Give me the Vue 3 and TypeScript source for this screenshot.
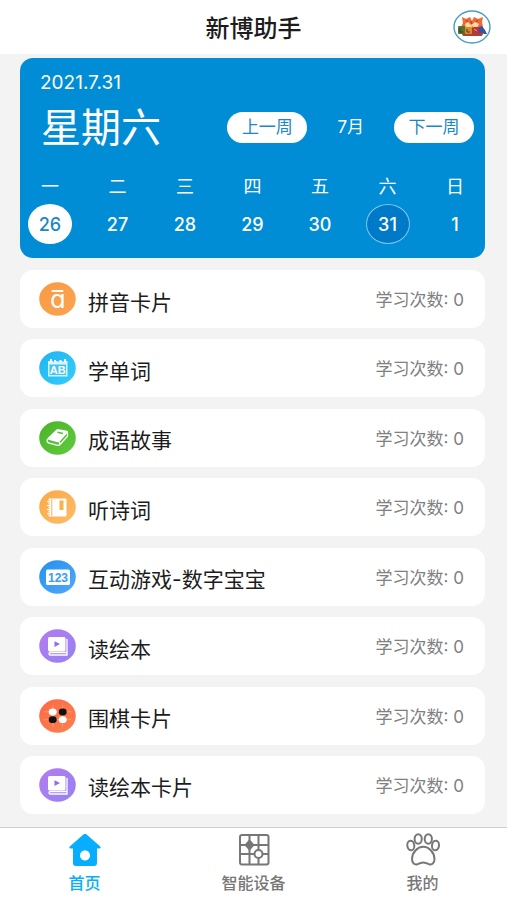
<script setup lang="ts">
type IconName = 'pinyin' | 'words' | 'book' | 'notebook' | 'numbers' | 'picture' | 'go'

interface Day { label: string; date: number; state?: 'selected' | 'today' }
interface Course { name: string; count: number; icon: IconName; from: string; to: string }

const days: Day[] = [
  { label: '一', date: 26, state: 'selected' },
  { label: '二', date: 27 },
  { label: '三', date: 28 },
  { label: '四', date: 29 },
  { label: '五', date: 30 },
  { label: '六', date: 31, state: 'today' },
  { label: '日', date: 1 },
]

const courses: Course[] = [
  { name: '拼音卡片', count: 0, icon: 'pinyin', from: '#f99a42', to: '#fca453' },
  { name: '学单词', count: 0, icon: 'words', from: '#1fb4f2', to: '#35cdfb' },
  { name: '成语故事', count: 0, icon: 'book', from: '#4bb32c', to: '#5fcb3a' },
  { name: '听诗词', count: 0, icon: 'notebook', from: '#fba945', to: '#fdbc6a' },
  { name: '互动游戏-数字宝宝', count: 0, icon: 'numbers', from: '#2390f0', to: '#52a9f8' },
  { name: '读绘本', count: 0, icon: 'picture', from: '#b57bee', to: '#9482f3' },
  { name: '围棋卡片', count: 0, icon: 'go', from: '#fb6a45', to: '#fc8050' },
  { name: '读绘本卡片', count: 0, icon: 'picture', from: '#b57bee', to: '#9482f3' },
]
</script>

<template>
  <div class="page">
    <header class="header">
      <h1 class="title">新博助手</h1>
      <a class="avatar" href="#" aria-label="新博助手">
        <svg width="38" height="34" viewBox="0 0 38 34">
          <ellipse cx="19" cy="17" rx="18" ry="16" fill="#fff" stroke="#4a9fbd" stroke-width="1.4" />
          <path d="M9 7l4 2 4-2 2 4 2-4 4 2 5-2-1 5 1 5-4 3H12l-4-3 2-4z" fill="#ee6a35" />
          <path d="M12 14l3-2 3 3 4-3 4 2-2 4H13z" fill="#f9d9a8" />
          <path d="M13 11h2M23 11h2M18 11l1 3" stroke="#a43e22" stroke-width="1" />
          <path d="M8 22h23l-2 4H10z" fill="#a44336" />
          <rect x="5" y="16" width="7" height="8" rx="1" fill="#55722f" />
          <rect x="12" y="17" width="7" height="7" rx="1" fill="#dd8a24" />
          <path d="M7 18v4h3M14 19v3h3" stroke="#3b362f" fill="none" />
          <rect x="19" y="17" width="7" height="7" rx="1" fill="#bd303e" />
          <path d="M26 17l3-1 3 4 2 4h-3l-2-2-3 2z" fill="#3453a5" />
          <path d="M21 19l3 2M18 16l3 1" stroke="#e5b23a" />
        </svg>
      </a>
    </header>

    <main class="main">
      <section class="calendar">
        <div class="full-date">2021.7.31</div>
        <div class="calendar-head">
          <h2 class="weekday">星期六</h2>
          <div class="switcher">
            <button class="week-button" type="button">上一周</button>
            <span class="month">7月</span>
            <button class="week-button" type="button">下一周</button>
          </div>
        </div>
        <div class="days">
          <div v-for="day in days" :key="day.date" class="day">
            <span class="day-label">{{ day.label }}</span>
            <button type="button" class="day-number" :class="day.state">{{ day.date }}</button>
          </div>
        </div>
      </section>

      <ul class="courses">
        <li v-for="(course, i) in courses" :key="course.name">
          <a class="course" href="#">
            <svg class="course-icon" width="37" height="34" viewBox="0 0 37 34" aria-hidden="true">
              <defs>
                <linearGradient :id="'tint' + i" x1="0" y1="0" x2="1" y2="1">
                  <stop offset="0" :stop-color="course.from" />
                  <stop offset="1" :stop-color="course.to" />
                </linearGradient>
              </defs>
              <ellipse cx="18.5" cy="17" rx="18.3" ry="16.7" :fill="`url(#tint${i})`" />
              <g v-if="course.icon === 'pinyin'">
                <rect x="12.500" y="8" width="12" height="2" rx="1" fill="#fff" />
                <text class="letter" x="19" y="25.500" font-size="25">ɑ</text>
              </g>
              <g v-else-if="course.icon === 'words'">
                <path d="M9 10h19.500v15.500H9z" fill="#d8f5ff" />
                <path d="M10.500 13.500h16.500V24H10.500z" fill="#43c5f4" />
                <path d="M12 8v3M16 9v2M21.500 9v2M26 8v3" stroke="#fff" stroke-width="2" />
                <path d="M14 10.500h1M18.500 10.500h1M23.500 10.500h1" stroke="#35bdf0" />
                <text class="bold" x="18.800" y="22.500" font-size="11">AB</text>
              </g>
              <g v-else-if="course.icon === 'book'">
                <path d="M17.500 8.500Q18.500 7.800 20 8.200L28 9.700Q30 10.200 28.800 11.600L20.500 20.700Q19.700 21.500 18.500 21.200L9.500 18.800Q7.500 18.200 9 16.700z" fill="#fff" />
                <path d="M8.500 18Q7.500 21 9.500 22L18.700 24.300Q20 24.500 21 23.500L28.500 15.300V11.500M20.600 21v3" fill="none" stroke="#fff" stroke-width="1.300" />
                <path d="M18.500 11.200l5.500 1.200" stroke="#58bd38" stroke-width="1.500" />
              </g>
              <g v-else-if="course.icon === 'notebook'">
                <rect x="9.500" y="8.500" width="18" height="18" rx="1" fill="#fff" />
                <path d="M12.800 9v17" stroke="#fbb255" />
                <path d="M8 11.500h3M8 15.500h3M8 19.500h3M8 23.500h3" stroke="#fbb255" stroke-width="2.200" />
                <path d="M8 11.500h3M8 15.500h3M8 19.500h3M8 23.500h3" stroke="#fff" stroke-width="1" />
                <rect x="20.500" y="10.500" width="4" height="9.500" rx=".5" fill="#fbb04f" />
              </g>
              <g v-else-if="course.icon === 'numbers'">
                <rect x="7" y="9.500" width="24" height="15.500" rx="1.500" fill="#fff" />
                <text class="bold numbers" x="19" y="21.500" font-size="12">123</text>
              </g>
              <g v-else-if="course.icon === 'picture'">
                <rect x="9" y="8" width="17.500" height="14.500" rx="1.500" fill="#fff" />
                <path d="M28 10v13.500H11.500Q10 23.500 10 24.800T11.500 26H28V22" fill="none" stroke="#fff" stroke-width="1.300" />
                <path d="M15.500 12.200l5.500 2.900-5.500 2.900z" fill="#9969ed" />
              </g>
              <g v-else>
                <path d="M14 6v22M23.500 6v22M5 12.800h27M5 20.700h27" stroke="#fdb78f" stroke-width=".8" opacity=".7" />
                <ellipse cx="13.700" cy="13" rx="4" ry="3.400" fill="#fff" />
                <ellipse cx="23.700" cy="13" rx="4" ry="3.400" fill="#111" />
                <ellipse cx="13.700" cy="20.700" rx="4" ry="3.400" fill="#111" />
                <ellipse cx="23.700" cy="20.700" rx="4" ry="3.400" fill="#fff" />
              </g>
            </svg>
            <span class="course-name">{{ course.name }}</span>
            <span class="course-count">学习次数: {{ course.count }}</span>
          </a>
        </li>
      </ul>
    </main>

    <nav class="tabs">
      <a class="tab active" href="#">
        <svg width="36" height="34" viewBox="0 0 36 34" aria-hidden="true">
          <path fill-rule="evenodd" d="M16.700 1.200Q18 .2 19.300 1.200L33 13.200Q34.500 15 32.500 15.500H30V30Q30 33 27 33H9Q6 33 6 30V15.500H3.500Q1.500 15 3 13.200zM18 17.200a5 5.200 0 1 0 0 10.400a5 5.200 0 1 0 0-10.400z" fill="#06aefd" />
        </svg>
        <span>首页</span>
      </a>
      <a class="tab" href="#">
        <svg width="36" height="34" viewBox="0 0 36 34" aria-hidden="true">
          <g fill="none" stroke="#777" stroke-width="2">
            <rect x="4" y="2" width="28.500" height="29.500" rx="2" />
            <path d="M13.500 2v29.500M22.500 2v15M22.500 25v6.500M4 12h28M4 21h14.500M26.500 21H32" />
            <ellipse cx="22.500" cy="21" rx="4" ry="4" />
          </g>
          <path d="M13.500 8l3.500 4-3.500 4L10 12z" fill="#777" stroke="#777" stroke-width="2.500" stroke-linejoin="round" />
        </svg>
        <span>智能设备</span>
      </a>
      <a class="tab" href="#">
        <svg width="36" height="34" viewBox="0 0 36 34" aria-hidden="true">
          <g fill="none" stroke="#777" stroke-width="2">
            <ellipse cx="5.800" cy="12.500" rx="3.500" ry="4.800" transform="rotate(-8 5.800 12.500)" />
            <ellipse cx="13.200" cy="6" rx="3.600" ry="4.800" />
            <ellipse cx="23.300" cy="6" rx="3.600" ry="4.800" />
            <ellipse cx="30.500" cy="12.500" rx="3.500" ry="4.800" transform="rotate(8 30.500 12.500)" />
            <path d="M18.200 13.800C12.500 13.800 7 19.500 7 26C7 30.500 9.500 32 12.500 31.200C15 30 16.500 29.500 18.200 29.500S21.500 30 24 31.200C27 32 29.500 30.500 29.500 26C29.500 19.500 24 13.800 18.200 13.800z" />
          </g>
        </svg>
        <span>我的</span>
      </a>
    </nav>
  </div>
</template>

<style>
body {
  margin: 0;
  background: #f3f3f3;
}
</style>

<style scoped>
.page {
  display: flex;
  flex-direction: column;
  min-height: 100vh;
  background: #f3f3f3;
  color: #1c1c1c;
  font-family: Inter, "Noto Sans CJK SC", sans-serif;
}

a {
  color: inherit;
  text-decoration: none;
}

button {
  border: 0;
  padding: 0;
  font: inherit;
  cursor: pointer;
}

svg {
  display: block;
  flex: none;
}

.header {
  display: grid;
  grid-template-columns: 1fr auto 1fr;
  align-items: center;
  height: 54px;
  padding: 0 16px;
  background: #fff;
}

.title {
  grid-column: 2;
  margin: 0;
  padding-top: 4px;
  font-size: 24px;
  font-weight: 500;
  line-height: 32px;
}

.avatar {
  justify-self: end;
}

.main {
  display: flex;
  flex: 1;
  flex-direction: column;
  gap: 12px;
  padding: 4px 22px 13px 20px;
}

.calendar {
  padding: 13px 8px 14px;
  border-radius: 13px;
  background: #008dd6;
  color: #fff;
}

.full-date {
  padding-left: 12px;
  font-size: 19px;
  line-height: 24px;
}

.calendar-head {
  display: flex;
  align-items: center;
  justify-content: space-between;
  padding: 0 3px 0 13px;
}

.weekday {
  margin: 0;
  padding-top: 2px;
  font-size: 40px;
  font-weight: 400;
  line-height: 62px;
}

.switcher {
  display: flex;
  align-items: center;
  gap: 30px;
  font-size: 17px;
  line-height: 24px;
}

.week-button {
  width: 80px;
  height: 31px;
  border-radius: 16px;
  background: #fff;
  color: #1a88c4;
}

.days {
  display: flex;
  justify-content: space-between;
  padding-top: 16px;
}

.day {
  display: flex;
  flex-direction: column;
  align-items: center;
  gap: 5px;
  width: 44px;
}

.day-label {
  font-size: 18px;
  line-height: 24px;
}

.day-number {
  box-sizing: border-box;
  width: 44px;
  height: 40px;
  border-radius: 50%;
  background: none;
  color: #fff;
  font-size: 18px;
  font-weight: 500;
}

.day-number.selected {
  background: #fff;
  color: #1a88c4;
}

.day-number.today {
  border: 1px solid #7cc8f0;
  background: #007ac8;
}

.courses {
  display: flex;
  flex: 1;
  flex-direction: column;
  justify-content: space-between;
  gap: 8px;
  margin: 0;
  padding: 0;
  list-style: none;
}

.course {
  display: flex;
  align-items: center;
  gap: 12px;
  height: 58px;
  padding: 0 21px 0 19px;
  border-radius: 13px;
  background: #fff;
}

.course-name {
  flex: 1;
  padding-top: 7px;
  font-size: 21px;
  line-height: 28px;
}

.course-count {
  padding-top: 2px;
  color: #808080;
  font-size: 17px;
  line-height: 24px;
}

.letter,
.bold {
  fill: #fff;
  text-anchor: middle;
}

.letter {
  font-family: "DejaVu Sans", sans-serif;
}

.bold {
  font-family: "Liberation Sans", sans-serif;
  font-weight: 700;
}

.numbers {
  fill: #389bf4;
}

.tabs {
  display: grid;
  grid-template-columns: repeat(3, 1fr);
  border-top: 1px solid #cfcfcf;
  background: #fff;
}

.tab {
  display: flex;
  flex-direction: column;
  align-items: center;
  gap: 4px;
  padding: 5px 0;
  color: #777;
  font-size: 16px;
  font-weight: 500;
  line-height: 24px;
}

.tab.active {
  color: #06aefd;
}
</style>
